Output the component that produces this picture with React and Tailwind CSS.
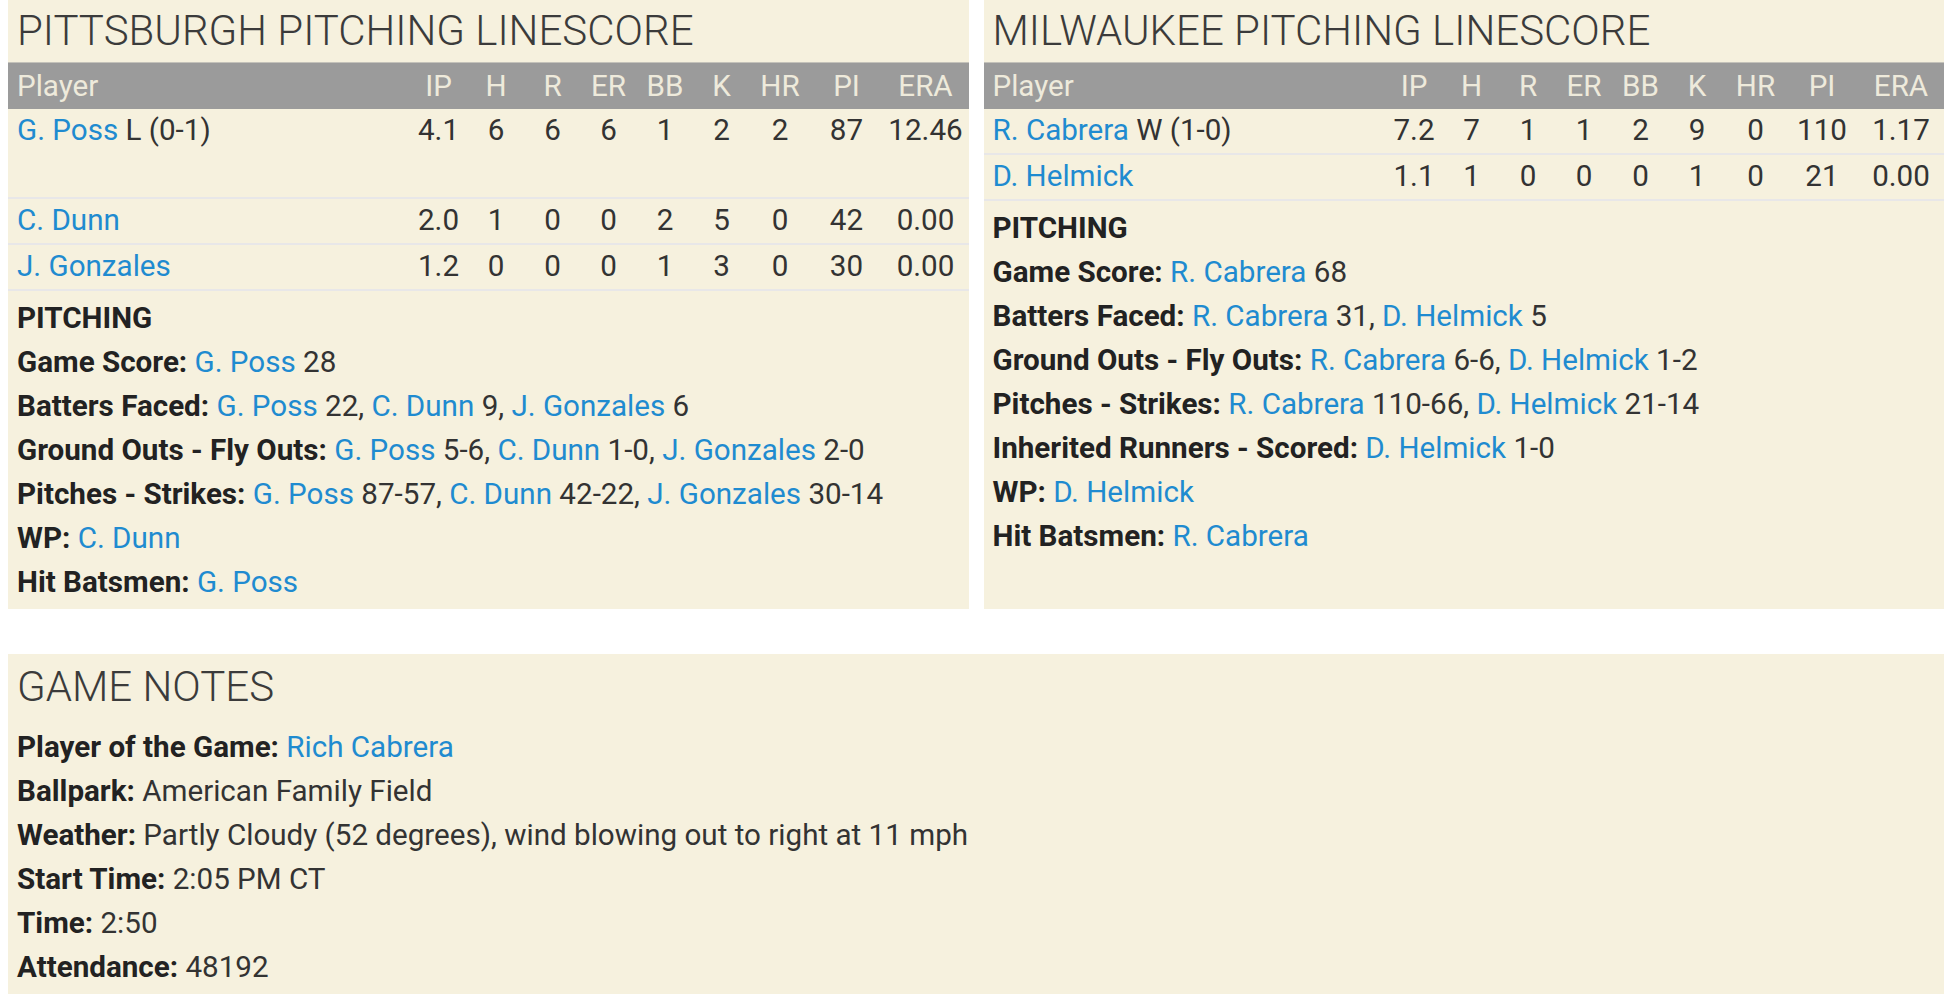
import React from "react";

const COLS = "grid grid-cols-[1fr_58px_57px_56px_56px_57px_56px_61px_72px_86px]";
const HEAD = ["IP", "H", "R", "ER", "BB", "K", "HR", "PI", "ERA"];

function L({ children }) {
  return <span className="text-[#1f8bd0]">{children}</span>;
}

function B({ children }) {
  return <span className="font-bold text-[#222]">{children}</span>;
}

function Table({ rows }) {
  return (
    <div>
      <div className={`${COLS} h-[47px] items-center bg-[#9b9b9b] text-[#eeeadb] border-t-[1px] border-[#c4c2ba]`}>
        <div className="pl-[9px]">Player</div>
        {HEAD.map((h) => (
          <div key={h} className="text-center">{h}</div>
        ))}
      </div>
      {rows.map((r, i) => (
        <div
          key={i}
          className={`${COLS} items-start border-b-2 border-[#e8e7e8] ${r.tall ? "h-[90px]" : "h-[46px]"}`}
        >
          <div className="pl-[9px] leading-[42px] whitespace-nowrap">
            <L>{r.name}</L>
            {r.dec ? <span className="text-[#333]"> {r.dec}</span> : null}
          </div>
          {r.stats.map((s, j) => (
            <div key={j} className="text-center leading-[42px] text-[#333] whitespace-nowrap">{s}</div>
          ))}
        </div>
      ))}
    </div>
  );
}

function Panel({ title, rows, lines }) {
  return (
    <div className="flex-1 bg-[#f6f1de]">
      <div className="pt-[7px] mb-[7px] pl-[9px] text-[42px] leading-[48px] font-light text-[#3b3b3b] whitespace-nowrap">
        {title}
      </div>
      <Table rows={rows} />
      <div className="px-[9px] pt-[5px] pb-[5px] leading-[44px] text-[#333]">
        <div><B>PITCHING</B></div>
        {lines.map((l, i) => (
          <div key={i} className="whitespace-nowrap">{l}</div>
        ))}
      </div>
    </div>
  );
}

export default function App() {
  const pitRows = [
    { name: "G. Poss", dec: "L (0-1)", stats: ["4.1", "6", "6", "6", "1", "2", "2", "87", "12.46"], tall: true },
    { name: "C. Dunn", stats: ["2.0", "1", "0", "0", "2", "5", "0", "42", "0.00"] },
    { name: "J. Gonzales", stats: ["1.2", "0", "0", "0", "1", "3", "0", "30", "0.00"] },
  ];
  const milRows = [
    { name: "R. Cabrera", dec: "W (1-0)", stats: ["7.2", "7", "1", "1", "2", "9", "0", "110", "1.17"] },
    { name: "D. Helmick", stats: ["1.1", "1", "0", "0", "0", "1", "0", "21", "0.00"] },
  ];
  const pitLines = [
    <><B>Game Score:</B> <L>G. Poss</L> 28</>,
    <><B>Batters Faced:</B> <L>G. Poss</L> 22, <L>C. Dunn</L> 9, <L>J. Gonzales</L> 6</>,
    <><B>Ground Outs - Fly Outs:</B> <L>G. Poss</L> 5-6, <L>C. Dunn</L> 1-0, <L>J. Gonzales</L> 2-0</>,
    <><B>Pitches - Strikes:</B> <L>G. Poss</L> 87-57, <L>C. Dunn</L> 42-22, <L>J. Gonzales</L> 30-14</>,
    <><B>WP:</B> <L>C. Dunn</L></>,
    <><B>Hit Batsmen:</B> <L>G. Poss</L></>,
  ];
  const milLines = [
    <><B>Game Score:</B> <L>R. Cabrera</L> 68</>,
    <><B>Batters Faced:</B> <L>R. Cabrera</L> 31, <L>D. Helmick</L> 5</>,
    <><B>Ground Outs - Fly Outs:</B> <L>R. Cabrera</L> 6-6, <L>D. Helmick</L> 1-2</>,
    <><B>Pitches - Strikes:</B> <L>R. Cabrera</L> 110-66, <L>D. Helmick</L> 21-14</>,
    <><B>Inherited Runners - Scored:</B> <L>D. Helmick</L> 1-0</>,
    <><B>WP:</B> <L>D. Helmick</L></>,
    <><B>Hit Batsmen:</B> <L>R. Cabrera</L></>,
  ];
  const notes = [
    <><B>Player of the Game:</B> <L>Rich Cabrera</L></>,
    <><B>Ballpark:</B> American Family Field</>,
    <><B>Weather:</B> Partly Cloudy (52 degrees), wind blowing out to right at 11 mph</>,
    <><B>Start Time:</B> 2:05 PM CT</>,
    <><B>Time:</B> 2:50</>,
    <><B>Attendance:</B> 48192</>,
  ];
  return (
    <div className="w-[1948px] min-h-[1000px] bg-white pl-[8px] pr-[4px] font-['Roboto',sans-serif] text-[29.6px]">
      <div className="flex gap-[15px] items-stretch">
        <Panel title="PITTSBURGH PITCHING LINESCORE" rows={pitRows} lines={pitLines} />
        <Panel title="MILWAUKEE PITCHING LINESCORE" rows={milRows} lines={milLines} />
      </div>
      <div className="mt-[45px] bg-[#f6f1de] pb-[5px]">
        <div className="pt-[9px] mb-[14px] pl-[9px] text-[42px] leading-[48px] font-light text-[#3b3b3b]">
          GAME NOTES
        </div>
        <div className="px-[9px] leading-[44px] text-[#333]">
          {notes.map((l, i) => (
            <div key={i} className="whitespace-nowrap">{l}</div>
          ))}
        </div>
      </div>
    </div>
  );
}
